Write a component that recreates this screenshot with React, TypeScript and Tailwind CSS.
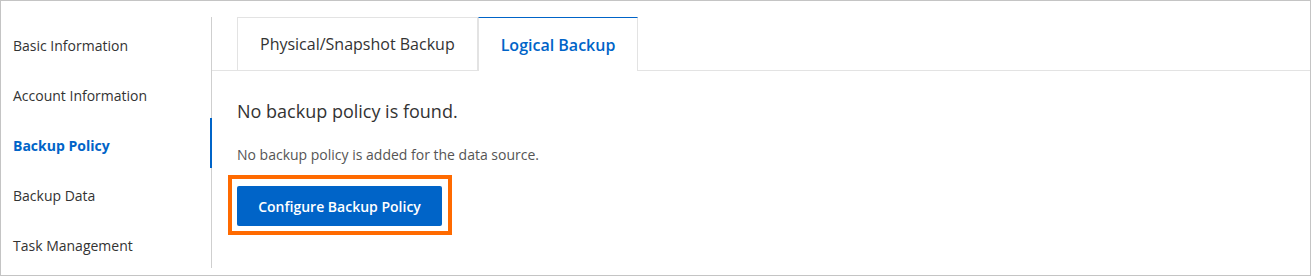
const navItems = [
  'Basic Information',
  'Account Information',
  'Backup Policy',
  'Backup Data',
  'Task Management',
]

export default function App() {
  const active = 'Backup Policy'
  return (
    <div
      className="w-[1311px] h-[276px] border border-[#c4c4c4] bg-white flex text-[#333]"
      style={{ fontFamily: '"Segoe UI", "Open Sans", sans-serif' }}
    >
      {/* Side nav */}
      <div className="w-[211px] shrink-0 pt-[16px]">
        <div className="h-[251px] border-r border-[#cfcfcf] flex flex-col pt-[3px]">
          {navItems.map((item) => (
            <div
              key={item}
              className={
                'relative shrink-0 h-[50px] flex items-center pl-[12px] text-[14px] ' +
                (item === active ? 'font-bold text-[#0064c8]' : 'text-[#333]')
              }
            >
              {item}
              {item === active && (
                <span className="absolute right-[-1px] top-[-2px] h-[50px] w-[2px] bg-[#0064c8]" />
              )}
            </div>
          ))}
        </div>
      </div>

      {/* Content */}
      <div className="flex-1 pt-[16px]">
        <div className="flex h-[54px] border-b border-[#e3e3e3] pl-[25px]">
          <div className="h-[54px] px-[22px] flex items-center border border-[#e3e3e3] text-[16px] text-[#333]">
            Physical/Snapshot Backup
          </div>
          <div className="h-[54px] px-[22px] flex items-center border-x border-[#e3e3e3] border-t border-t-[#0064c8] mb-[-1px] bg-white text-[16px] font-semibold text-[#0064c8]">
            Logical Backup
          </div>
        </div>

        <div className="pl-[25px]">
          <div className="mt-[28px] text-[18px] leading-[24px] text-[#333]">
            No backup policy is found.
          </div>
          <div className="mt-[22px] text-[14px] leading-[20px] text-[#555]">
            No backup policy is added for the data source.
          </div>
          <div className="mt-[21px] relative inline-block">
            <button className="h-[40px] w-[205px] rounded-[2px] bg-[#0064c8] text-white text-[14px] font-semibold">
              Configure Backup Policy
            </button>
            <span className="absolute left-[-9px] right-[-10px] top-[-11px] bottom-[-9px] border-[4px] border-[#ff6a00] pointer-events-none" />
          </div>
        </div>
      </div>
    </div>
  )
}
